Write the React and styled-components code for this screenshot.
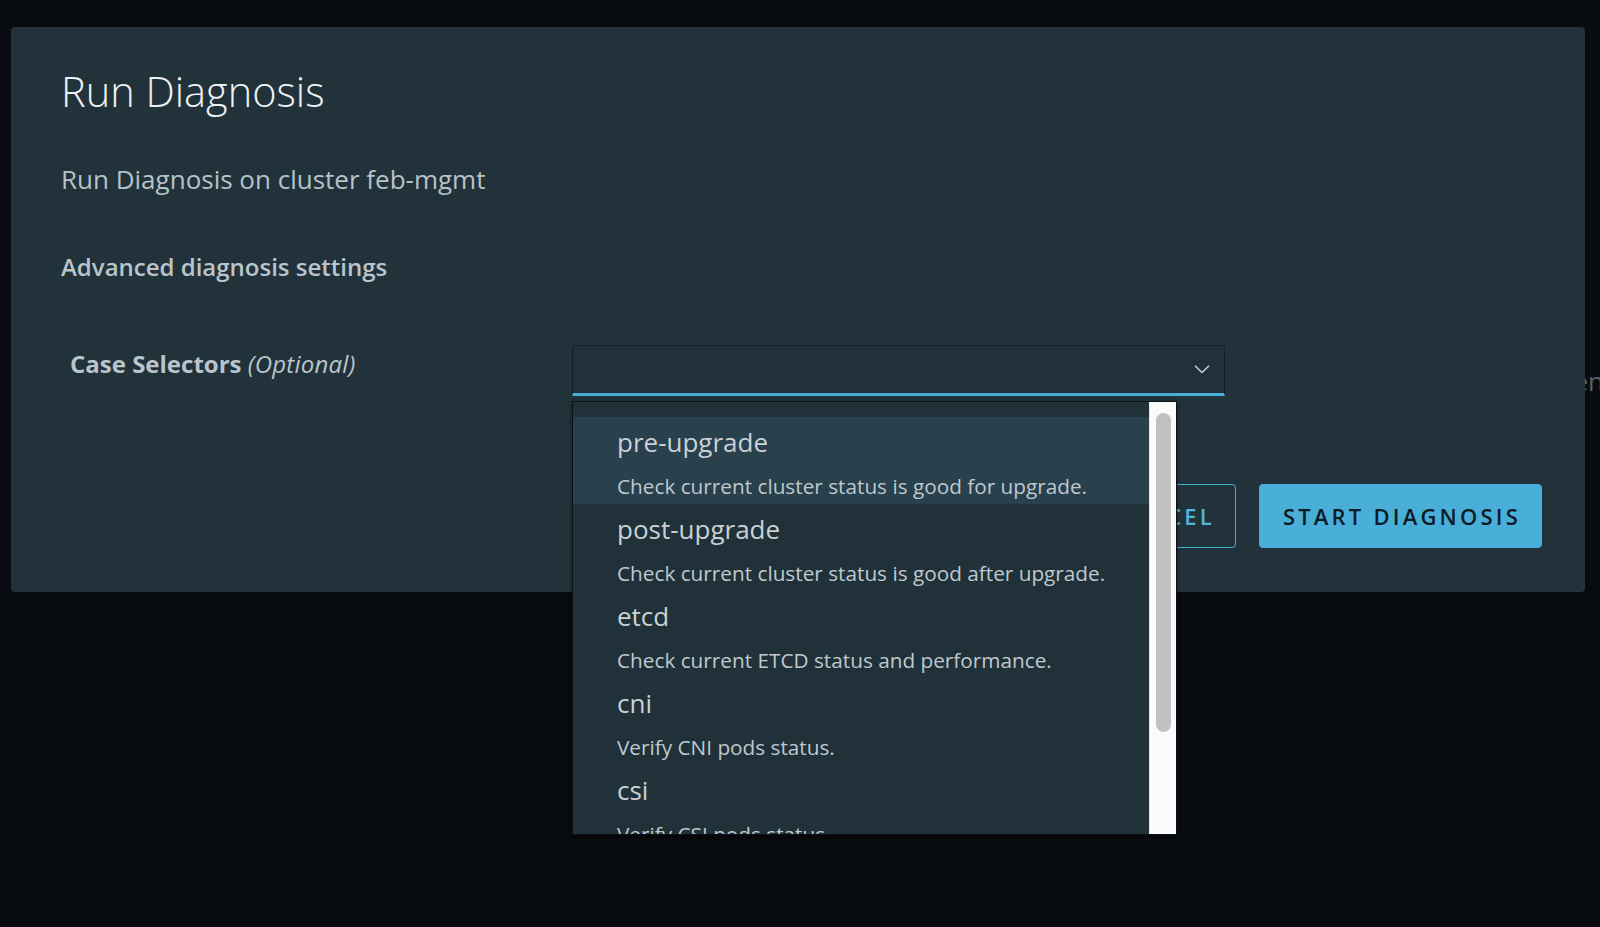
import React from "react";
import styled, { createGlobalStyle } from "styled-components";

const GlobalStyle = createGlobalStyle`
  html, body {
    margin: 0;
    background: #080b0f;
    overflow: hidden;
  }
  body {
    font-family: "Open Sans", "Noto Sans", sans-serif;
  }
  * { box-sizing: border-box; }
`;

const Page = styled.div`
  position: relative;
  width: 1600px;
  height: 927px;
  overflow: hidden;
`;

const PageContent = styled.div`
  display: flex;
  justify-content: flex-end;
  padding-top: 364px;
  margin-right: -4px;
  font-size: 26px;
  line-height: 34px;
  color: #5b6266;
`;

const Overlay = styled.div`
  position: absolute;
  inset: 0;
  padding: 27px 15px 0 11px;
`;

const Card = styled.section`
  background: #22323b;
  border-radius: 4px;
  padding: 40px 43px 44px 50px;
  display: flex;
  flex-direction: column;
`;

const Title = styled.h3`
  margin: 0;
  font-size: 41.5px;
  line-height: 48px;
  font-weight: 300;
  color: #eef1f3;
`;

const Subtitle = styled.p`
  margin: 48px 0 0;
  font-size: 26px;
  line-height: 32px;
  font-weight: 400;
  color: #b6c2c8;
`;

const SectionTitle = styled.h4`
  margin: 57px 0 0;
  font-size: 24px;
  line-height: 30px;
  font-weight: 600;
  color: #b9c5cb;
`;

const FormRow = styled.div`
  margin-top: 63px;
  display: grid;
  grid-template-columns: 511px 653px;
  align-items: start;
`;

const Label = styled.label`
  padding: 4px 0 0 9px;
  font-size: 24px;
  line-height: 30px;
  font-weight: 700;
  color: #b9c5cb;
`;

const Optional = styled.em`
  font-weight: 400;
  font-style: italic;
  letter-spacing: 0.2px;
`;

const SelectWrap = styled.div`
  position: relative;
`;

const SelectBox = styled.div`
  height: 51px;
  border: 1px solid #141f26;
  border-bottom: 3px solid #49afd9;
  border-radius: 3px 3px 0 0;
  background: #21313a;
  display: flex;
  align-items: center;
  justify-content: flex-end;
  padding-right: 14px;
`;

const Dropdown = styled.div`
  position: absolute;
  top: calc(100% + 5px);
  left: 0;
  width: 605px;
  height: 434px;
  border: 1px solid #0b1115;
  background: #21313a;
  box-shadow: 0 2px 4px rgba(0, 0, 0, 0.5);
  display: flex;
  z-index: 10;
`;

const Viewport = styled.div`
  flex: 1;
  overflow: hidden;
`;

const List = styled.ul`
  list-style: none;
  margin: 0;
  padding: 15px 0 0;
`;

const Option = styled.li`
  padding: 9px 0 5px 44px;
  background: ${(p) => (p.$active ? "#29404d" : "transparent")};
`;

const OptionTitle = styled.div`
  font-size: 26px;
  line-height: 32px;
  color: #c9d1d5;
  margin-bottom: 15px;
`;

const OptionDesc = styled.div`
  font-size: 20.75px;
  line-height: 26px;
  color: #bfc9ce;
  white-space: nowrap;
`;

const ScrollRail = styled.div`
  width: 27px;
  flex: none;
  background: #fbfbfb;
  border-left: 1px solid #e4e4e4;
  padding: 11px 5px 0 6px;
`;

const ScrollThumb = styled.div`
  height: 319px;
  border-radius: 8px;
  background: #c1c1c1;
`;

const Footer = styled.div`
  margin-top: 88px;
  display: flex;
  justify-content: flex-end;
  gap: 23px;
`;

const Button = styled.button`
  height: 64px;
  padding: 0 20px 0 23px;
  border-radius: 4px;
  font-family: inherit;
  font-size: 22px;
  font-weight: 600;
  letter-spacing: 3.2px;
  text-transform: uppercase;
  cursor: pointer;
  border: 1.5px solid #49afd9;
  background: ${(p) => (p.$primary ? "#49afd9" : "transparent")};
  color: ${(p) => (p.$primary ? "#0d1b24" : "#55b4dc")};
`;

const Chevron = () => (
  <svg width="16" height="9" viewBox="0 0 16 9" fill="none">
    <polyline
      points="1.5,1.2 8,7.5 14.5,1.2"
      stroke="#c5cdd2"
      strokeWidth="1.6"
      strokeLinecap="round"
      strokeLinejoin="round"
    />
  </svg>
);

const options = [
  { name: "pre-upgrade", desc: "Check current cluster status is good for upgrade." },
  { name: "post-upgrade", desc: "Check current cluster status is good after upgrade." },
  { name: "etcd", desc: "Check current ETCD status and performance." },
  { name: "cni", desc: "Verify CNI pods status." },
  { name: "csi", desc: "Verify CSI pods status." },
];

export default function App() {
  return (
    <>
      <GlobalStyle />
      <Page>
        <PageContent>
          <span>en</span>
        </PageContent>
        <Overlay>
          <Card>
            <Title>Run Diagnosis</Title>
            <Subtitle>Run Diagnosis on cluster feb-mgmt</Subtitle>
            <SectionTitle>Advanced diagnosis settings</SectionTitle>
            <FormRow>
              <Label>
                Case Selectors <Optional>(Optional)</Optional>
              </Label>
              <SelectWrap>
                <SelectBox>
                  <Chevron />
                </SelectBox>
                <Dropdown>
                  <Viewport>
                    <List>
                      {options.map((o, i) => (
                        <Option key={o.name} $active={i === 0}>
                          <OptionTitle>{o.name}</OptionTitle>
                          <OptionDesc>{o.desc}</OptionDesc>
                        </Option>
                      ))}
                    </List>
                  </Viewport>
                  <ScrollRail>
                    <ScrollThumb />
                  </ScrollRail>
                </Dropdown>
              </SelectWrap>
            </FormRow>
            <Footer>
              <Button>Cancel</Button>
              <Button $primary>Start Diagnosis</Button>
            </Footer>
          </Card>
        </Overlay>
      </Page>
    </>
  );
}
